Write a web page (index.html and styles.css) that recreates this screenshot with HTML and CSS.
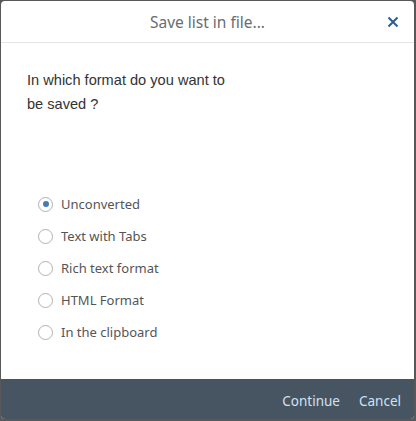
FILE: index.html
```html
<!DOCTYPE html>
<html>
<head>
<meta charset="utf-8">
<link rel="stylesheet" href="styles.css">
</head>
<body>
<div class="dialog">
  <header class="head">
    <span class="title">Save list in file...</span>
    <span class="close">
      <svg width="12" height="12" viewBox="0 0 12 12"><path d="M1.5 1.5 L10.5 10.5 M10.5 1.5 L1.5 10.5" stroke="#2b5f8e" stroke-width="2" stroke-linecap="butt"/></svg>
    </span>
  </header>
  <div class="content">
    <p class="question">In which format do you want to<br>be saved ?</p>
    <ul class="options">
      <li class="opt"><span class="radio on"></span>Unconverted</li>
      <li class="opt"><span class="radio"></span>Text with Tabs</li>
      <li class="opt"><span class="radio"></span>Rich text format</li>
      <li class="opt"><span class="radio"></span>HTML Format</li>
      <li class="opt"><span class="radio"></span>In the clipboard</li>
    </ul>
  </div>
  <footer class="foot">
    <span class="btn">Continue</span>
    <span class="btn">Cancel</span>
  </footer>
</div>
</body>
</html>
```
FILE: styles.css
```css
html, body { margin: 0; padding: 0; }
body {
  width: 416px;
  height: 421px;
  background: #585858;
  padding: 1px 0 0 1px;
  box-sizing: border-box;
  font-family: "Noto Sans", "Open Sans", sans-serif;
}
.dialog {
  width: 413px;
  height: 418px;
  background: #fff;
  border-radius: 4px;
  overflow: hidden;
  display: flex;
  flex-direction: column;
}
.head {
  height: 41px;
  border-bottom: 1px solid #e5e5e5;
  display: flex;
  align-items: center;
  justify-content: center;
  position: relative;
  flex: none;
}
.title {
  font-size: 15.5px;
  color: #6a6d70;
  margin-left: 0;
}
.close {
  position: absolute;
  right: 15px;
  top: 15px;
  width: 12px;
  height: 12px;
  display: flex;
}
.content {
  flex: 1;
  padding: 0 26px;
}
.question {
  margin: 25px 0 0 0;
  font-family: "Liberation Sans", Arial, sans-serif;
  font-size: 14.6px;
  line-height: 24px;
  color: #333;
}
.options {
  list-style: none;
  margin: 72px 0 0 0;
  padding: 0 0 0 11px;
  display: flex;
  flex-direction: column;
}
.opt {
  height: 32px;
  display: flex;
  align-items: center;
  font-size: 13px;
  color: #555;
}
.radio {
  width: 13px;
  height: 13px;
  border: 1.5px solid #b0b0b0;
  border-radius: 50%;
  margin-right: 8px;
  display: flex;
  align-items: center;
  justify-content: center;
  flex: none;
}
.radio.on::after {
  content: "";
  width: 6px;
  height: 6px;
  border-radius: 50%;
  background: #3f7cb9;
}
.foot {
  height: 40px;
  box-sizing: border-box;
  padding-top: 3px;
  flex: none;
  background: #475461;
  display: flex;
  align-items: center;
  justify-content: flex-end;
  gap: 19px;
  padding-right: 13px;
}
.btn {
  font-size: 13.5px;
  color: #cfe2f5;
}
```
